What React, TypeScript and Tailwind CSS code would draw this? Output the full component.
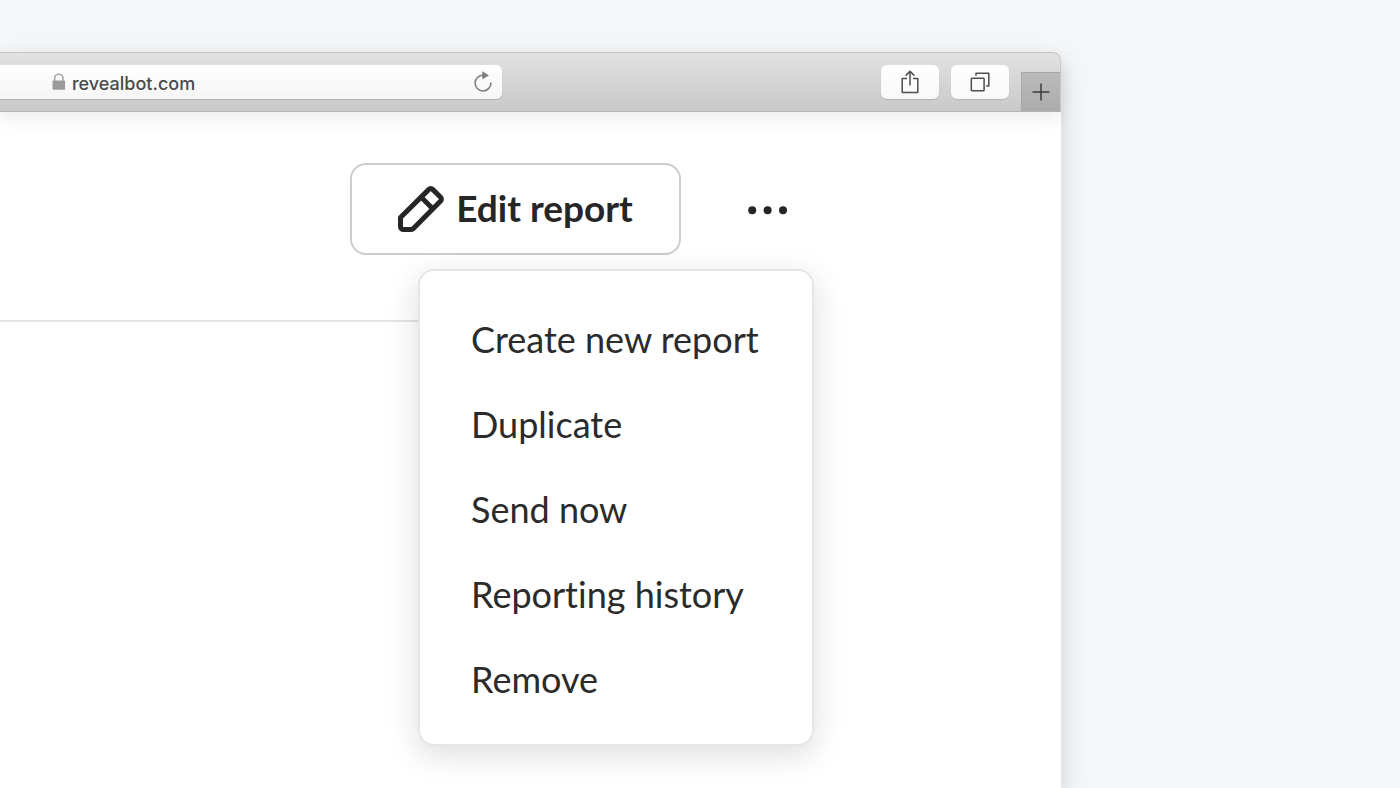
import React from 'react';

const MENU_ITEMS = ['Create new report', 'Duplicate', 'Send now', 'Reporting history', 'Remove'];

const toolbarButton =
  'flex h-[34px] w-[58px] items-center justify-center rounded-md bg-linear-to-b from-white to-[#f8f8f8] shadow-[0_1px_1px_rgba(0,0,0,0.14)]';

const LockIcon: React.FC = () => (
  <svg width="14" height="18" viewBox="0 0 14 18" fill="none" aria-hidden="true">
    <rect x="0.5" y="7.5" width="12.6" height="9.2" rx="1" fill="#9b9b9b" />
    <path d="M2.6 8V5.4a4.2 4.2 0 0 1 8.4 0V8" stroke="#a5a5a5" strokeWidth="1.6" />
  </svg>
);

const ReloadIcon: React.FC = () => (
  <svg width="20" height="24" viewBox="0 0 20 24" fill="none" aria-hidden="true">
    <path d="M10.5 5.2A7.9 7.9 0 1 0 17.9 13" stroke="#7c7c7c" strokeWidth="1.6" strokeLinecap="round" />
    <path d="M9.3 1.2v8L16 5.4z" fill="#7c7c7c" />
  </svg>
);

const ShareIcon: React.FC = () => (
  <svg width="18" height="24" viewBox="0 0 18 24" fill="none" stroke="#4d4d4d" strokeWidth="1.5" aria-hidden="true">
    <path d="M6 8.5H1.2v14h15.6v-14H12" strokeLinejoin="round" />
    <path d="M9 15.5V1.2M4.6 5.6 9 1.2 13.4 5.6" />
  </svg>
);

const TabsIcon: React.FC = () => (
  <svg width="20" height="20" viewBox="0 0 20 20" fill="none" stroke="#4d4d4d" strokeWidth="1.5" aria-hidden="true">
    <rect x="1.3" y="6.2" width="12.8" height="12.6" rx="0.8" />
    <path d="M6 3.8V1.3h12.8v12.6h-2.6" strokeLinejoin="round" />
  </svg>
);

const PlusIcon: React.FC = () => (
  <svg width="18" height="18" viewBox="0 0 18 18" stroke="#3c3c3c" strokeWidth="1.5" aria-hidden="true">
    <path d="M9 0.5v17M0.5 9h17" />
  </svg>
);

const PencilIcon: React.FC = () => (
  <svg
    width="46"
    height="46"
    viewBox="0 0 46 46"
    fill="none"
    stroke="#262626"
    strokeWidth="5"
    strokeLinejoin="round"
    aria-hidden="true"
  >
    <path d="M2.5 31.5 30.9 3.4a2.7 2.7 0 0 1 3.8 0l7.9 7.9a2.7 2.7 0 0 1 0 3.8L15.4 42.6a3 3 0 0 1-2.1.9H5.5a3 3 0 0 1-3-3z" />
    <path d="M23.5 11.5 34 22" />
  </svg>
);

const DotsIcon: React.FC = () => (
  <svg width="40" height="10" viewBox="0 0 40 10" fill="#262626" aria-hidden="true">
    <circle cx="4.2" cy="5.2" r="4" />
    <circle cx="19.6" cy="5.2" r="4" />
    <circle cx="35" cy="5.2" r="4" />
  </svg>
);

const BrowserToolbar: React.FC = () => (
  <header className="flex items-start rounded-tr-lg border-t border-r border-b border-t-[#c4c4c4] border-r-[#c8c8c8] border-b-[#b4b4b4] bg-linear-to-b from-[#e2e2e2] to-[#c9c9c9] shadow-[0_8px_16px_rgba(0,0,0,0.07)]">
    <div className="my-3 flex h-[34px] w-[502px] items-center rounded-r-md bg-linear-to-b from-white to-[#f5f5f5] pr-[9px] pl-[52px] shadow-[0_1px_1px_rgba(0,0,0,0.14)]">
      <LockIcon />
      <input
        type="text"
        aria-label="Address"
        defaultValue="revealbot.com"
        className="ml-1.5 min-w-0 flex-1 bg-transparent pt-[3px] font-['Inter',sans-serif] text-lg font-medium text-[#4a4a4a] outline-none"
      />
      <button type="button" aria-label="Reload">
        <ReloadIcon />
      </button>
    </div>
    <div className="mt-3 ml-auto flex gap-3">
      <button type="button" aria-label="Share" className={toolbarButton}>
        <ShareIcon />
      </button>
      <button type="button" aria-label="Show tabs" className={toolbarButton}>
        <TabsIcon />
      </button>
    </div>
    <button
      type="button"
      aria-label="New tab"
      className="ml-3 flex h-[39px] w-[39px] items-center justify-center self-end border-t border-l border-[#a8a8a8] bg-linear-to-b from-[#bababa] to-[#acacac]"
    >
      <PlusIcon />
    </button>
  </header>
);

const ReportMenu: React.FC = () => (
  <ul className="absolute top-full right-0 w-[396px] rounded-2xl border-2 border-[#e6e6e6] bg-white pt-[25px] pb-[23px] shadow-[0_8px_32px_rgba(0,0,0,0.14)]">
    {MENU_ITEMS.map((item) => (
      <li key={item}>
        <button type="button" className="h-[85px] w-full px-[51px] text-left text-[36px] whitespace-nowrap text-[#2b2b2b]">
          {item}
        </button>
      </li>
    ))}
  </ul>
);

const App: React.FC = () => {
  return (
    <div className="min-h-screen overflow-hidden bg-[#f4f6f8] pt-[52px] pr-[339px] font-['Lato',sans-serif] [font-variant-ligatures:none]">
      <div className="flex min-h-[calc(100vh-52px)] flex-col rounded-tr-lg bg-white shadow-[0_10px_24px_rgba(0,0,0,0.16)]">
        <BrowserToolbar />
        <main className="pr-[247px]">
          <div className="flex h-[210px] items-start justify-end border-b-2 border-[#e4e4e4] pt-[51px]">
            <button
              type="button"
              className="flex h-[92px] w-[331px] items-center justify-center gap-3 rounded-2xl border-2 border-[#cccccc] bg-white text-[37px] font-bold text-[#262626]"
            >
              <PencilIcon />
              <span className="pb-0.5">Edit report</span>
            </button>
            <div className="relative ml-10 h-[106px]">
              <button type="button" aria-label="More actions" className="flex h-[94px] items-center pr-[26px] pl-[27px]">
                <DotsIcon />
              </button>
              <ReportMenu />
            </div>
          </div>
        </main>
      </div>
    </div>
  );
};

export default App;
